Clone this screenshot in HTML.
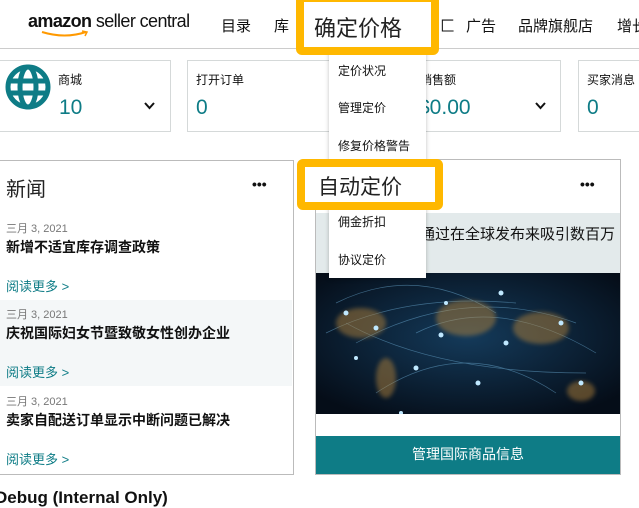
<!DOCTYPE html>
<html><head><meta charset="utf-8"><style>
*{margin:0;padding:0;box-sizing:border-box}
body{width:639px;height:504px;overflow:hidden;background:#fff;font-family:"Liberation Sans","Noto Sans CJK SC",sans-serif;position:relative;color:#111}
.a{position:absolute;white-space:nowrap}
.tile{position:absolute;top:60px;height:72px;border:1px solid #d5d9d9;background:#fff}
.lbl{font-size:12px;color:#111}
.val{font-size:21px;color:#0e7c86}
.card{position:absolute;border:1px solid #bbb;background:#fff}
.date{font-size:11px;color:#777}
.nt{font-size:14px;font-weight:bold;color:#111}
.rm{font-size:13px;color:#0e7c86}
.dd{font-size:12px;color:#111}
.ob{position:absolute;border:8px solid #ffb800;border-radius:6px;background:#fff}
</style></head><body>
<div class="a" style="left:28px;top:11px;font-size:18px;letter-spacing:-0.6px"><b>amazon</b> seller central</div>
<svg class="a" style="left:40px;top:30px" width="50" height="8"><path d="M2 2 Q25 9 46 2" stroke="#f90" stroke-width="2" fill="none"/><path d="M42 1 L47 2 L45 6" stroke="#f90" stroke-width="1.5" fill="none"/></svg>
<div class="a" style="left:221px;top:15px;font-size:15px">目录</div>
<div class="a" style="left:274px;top:15px;font-size:15px">库</div>
<div class="a" style="left:440px;top:15px;font-size:15px">匚</div>
<div class="a" style="left:466px;top:15px;font-size:15px">广告</div>
<div class="a" style="left:518px;top:15px;font-size:15px">品牌旗舰店</div>
<div class="a" style="left:617px;top:15px;font-size:15px">增长</div>
<div class="a" style="left:0;top:48px;width:639px;height:1px;background:#ccc"></div>

<div class="tile" style="left:-2px;width:173px"></div>
<svg class="a" style="left:5px;top:64px" width="46" height="46" viewBox="0 0 46 46"><g fill="none" stroke="#0e7c86" stroke-width="5"><circle cx="23" cy="23" r="20"/><ellipse cx="23" cy="23" rx="8" ry="20"/><line x1="3" y1="17" x2="43" y2="17"/><line x1="3" y1="29" x2="43" y2="29"/></g></svg>
<div class="a lbl" style="left:58px;top:71px">商城</div>
<div class="a val" style="left:59px;top:96px">10</div>
<svg class="a" style="left:144px;top:102px" width="11" height="8"><path d="M1 1 L5.5 6 L10 1" stroke="#111" stroke-width="2" fill="none"/></svg>
<div class="tile" style="left:187px;width:145px"></div>
<div class="a lbl" style="left:196px;top:71px">打开订单</div>
<div class="a val" style="left:196px;top:96px">0</div>
<div class="tile" style="left:415px;width:146px"></div>
<div class="a lbl" style="left:420px;top:71px">销售额</div>
<div class="a val" style="left:418px;top:96px">$0.00</div>
<svg class="a" style="left:535px;top:102px" width="11" height="8"><path d="M1 1 L5.5 6 L10 1" stroke="#111" stroke-width="2" fill="none"/></svg>
<div class="tile" style="left:578px;width:80px"></div>
<div class="a lbl" style="left:587px;top:71px">买家消息</div>
<div class="a val" style="left:587px;top:96px">0</div>

<div class="card" style="left:-2px;top:160px;width:296px;height:315px"></div>
<div class="a" style="left:6px;top:173px;font-size:20px;color:#222">新闻</div>
<div class="a" style="left:252px;top:176px;font-size:14px;font-weight:bold">•••</div>
<div class="a date" style="left:6px;top:220px">三月 3, 2021</div>
<div class="a nt" style="left:6px;top:237px">新增不适宜库存调查政策</div>
<div class="a rm" style="left:6px;top:276px">阅读更多 &gt;</div>
<div class="a" style="left:0;top:300px;width:292px;height:86px;background:#f4f7f8"></div>
<div class="a date" style="left:6px;top:306px">三月 3, 2021</div>
<div class="a nt" style="left:6px;top:323px">庆祝国际妇女节暨致敬女性创办企业</div>
<div class="a rm" style="left:6px;top:362px">阅读更多 &gt;</div>
<div class="a date" style="left:6px;top:393px">三月 3, 2021</div>
<div class="a nt" style="left:6px;top:410px">卖家自配送订单显示中断问题已解决</div>
<div class="a rm" style="left:6px;top:449px">阅读更多 &gt;</div>

<div class="card" style="left:315px;top:159px;width:306px;height:316px"></div>
<div class="a" style="left:580px;top:176px;font-size:14px;font-weight:bold">•••</div>
<div class="a" style="left:316px;top:213px;width:304px;height:60px;background:#e3eaeb"></div>
<div class="a" style="left:420px;top:223px;font-size:15px">通过在全球发布来吸引数百万</div>
<svg class="a" style="left:316px;top:273px" width="304" height="141" viewBox="0 0 304 141"><defs><radialGradient id="g" cx="50%" cy="45%" r="65%"><stop offset="0" stop-color="#143a5a"/><stop offset="1" stop-color="#050d18"/></radialGradient><filter id="b"><feGaussianBlur stdDeviation="2"/></filter></defs><rect width="304" height="141" fill="url(#g)"/><g fill="none" stroke="#6fb0d8" stroke-width="0.7" opacity="0.5"><path d="M20 30 Q100 -10 180 40"/><path d="M40 70 Q150 10 260 50"/><path d="M60 120 Q150 60 240 120"/><path d="M30 50 Q120 100 270 100"/><path d="M100 60 Q180 20 280 80"/><path d="M10 60 Q90 20 200 30"/></g><g fill="#c08a3a" opacity="0.45" filter="url(#b)"><ellipse cx="45" cy="50" rx="25" ry="15"/><ellipse cx="150" cy="45" rx="30" ry="18"/><ellipse cx="225" cy="55" rx="28" ry="16"/><ellipse cx="70" cy="105" rx="10" ry="20"/><ellipse cx="265" cy="118" rx="14" ry="10"/></g><g fill="#bfe8ff"><circle cx="30" cy="40" r="2.5"/><circle cx="60" cy="55" r="2.5"/><circle cx="125" cy="62" r="2.5"/><circle cx="190" cy="70" r="2.5"/><circle cx="245" cy="50" r="2.5"/><circle cx="100" cy="95" r="2.5"/><circle cx="162" cy="110" r="2.5"/><circle cx="265" cy="110" r="2.5"/><circle cx="85" cy="140" r="2"/><circle cx="185" cy="20" r="2.5"/><circle cx="130" cy="30" r="2"/><circle cx="40" cy="85" r="2"/></g></svg>
<div class="a" style="left:316px;top:436px;width:304px;height:38px;background:#0e7c86;color:#fff;font-size:14px;text-align:center;line-height:36px">管理国际商品信息</div>

<div class="a" style="left:-5px;top:488px;font-size:17px;font-weight:bold">Debug (Internal Only)</div>

<div class="a" style="left:329px;top:50px;width:97px;height:228px;background:#fff;box-shadow:0 1px 4px rgba(0,0,0,.25)"></div>
<div class="a dd" style="left:338px;top:62px">定价状况</div>
<div class="a dd" style="left:338px;top:99px">管理定价</div>
<div class="a dd" style="left:338px;top:137px">修复价格警告</div>
<div class="a dd" style="left:338px;top:213px">佣金折扣</div>
<div class="a dd" style="left:338px;top:251px">协议定价</div>

<div class="ob" style="left:296px;top:-6px;width:143px;height:61px"></div>
<div class="a" style="left:314px;top:11px;font-size:22px;color:#222">确定价格</div>
<div class="ob" style="left:297px;top:159px;width:146px;height:51px"></div>
<div class="a" style="left:318px;top:171px;font-size:21px;color:#222">自动定价</div>
</body></html>
